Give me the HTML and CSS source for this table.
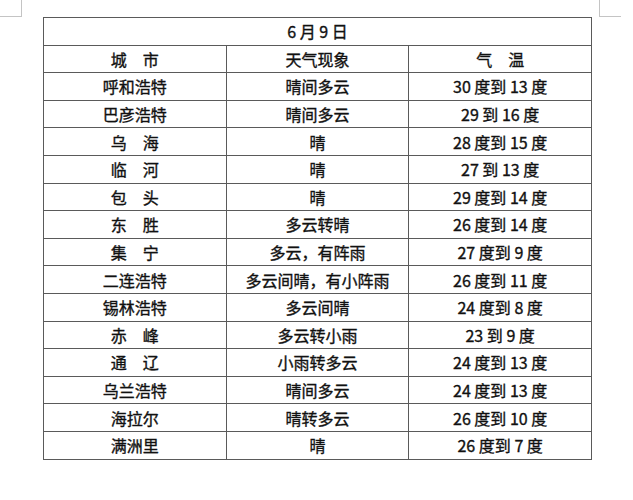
FILE: index.html
```html
<!DOCTYPE html>
<html lang="zh">
<head>
<meta charset="utf-8">
<link rel="stylesheet" href="styles.css">
</head>
<body>
<div class="page">
  <span class="mark mark-left"></span>
  <span class="mark mark-right"></span>
  <table class="weather">
    <tr><td colspan="3">6 月 9 日</td></tr>
    <tr><td>城　市</td><td>天气现象</td><td>气　温</td></tr>
    <tr><td>呼和浩特</td><td>晴间多云</td><td>30 度到 13 度</td></tr>
    <tr><td>巴彦浩特</td><td>晴间多云</td><td>29 到 16 度</td></tr>
    <tr><td>乌　海</td><td>晴</td><td>28 度到 15 度</td></tr>
    <tr><td>临　河</td><td>晴</td><td>27 到 13 度</td></tr>
    <tr><td>包　头</td><td>晴</td><td>29 度到 14 度</td></tr>
    <tr><td>东　胜</td><td>多云转晴</td><td>26 度到 14 度</td></tr>
    <tr><td>集　宁</td><td>多云，有阵雨</td><td>27 度到 9 度</td></tr>
    <tr><td>二连浩特</td><td>多云间晴，有小阵雨</td><td>26 度到 11 度</td></tr>
    <tr><td>锡林浩特</td><td>多云间晴</td><td>24 度到 8 度</td></tr>
    <tr><td>赤　峰</td><td>多云转小雨</td><td>23 到 9 度</td></tr>
    <tr><td>通　辽</td><td>小雨转多云</td><td>24 度到 13 度</td></tr>
    <tr><td>乌兰浩特</td><td>晴间多云</td><td>24 度到 13 度</td></tr>
    <tr><td>海拉尔</td><td>晴转多云</td><td>26 度到 10 度</td></tr>
    <tr><td>满洲里</td><td>晴</td><td>26 度到 7 度</td></tr>
  </table>
</div>
</body>
</html>
```

FILE: styles.css
```css
html, body {
  margin: 0;
  padding: 0;
  background: #ffffff;
}
.page {
  position: relative;
  width: 633px;
  height: 500px;
  padding: 17px 0 0 43px;
  box-sizing: border-box;
}
.mark {
  position: absolute;
  top: 0;
  width: 21px;
  height: 16px;
  border-bottom: 1px solid #c4c4c4;
}
.mark-left {
  left: 0;
  border-right: 1px solid #c4c4c4;
}
.mark-right {
  left: 599px;
  border-left: 1px solid #c4c4c4;
}
.weather {
  border-collapse: collapse;
  width: 549px;
  table-layout: fixed;
  font-family: "Noto Sans CJK SC", "Noto Sans", sans-serif;
  font-size: 16px;
  font-weight: 400;
  color: #111111;
  -webkit-text-stroke: 0.35px #111111;
}
.weather tr {
  height: 27.6px;
}
.weather td {
  border: 1.5px solid #5a5a5a;
  text-align: center;
  padding: 0;
  line-height: 20px;
  width: 33.333%;
}
```
